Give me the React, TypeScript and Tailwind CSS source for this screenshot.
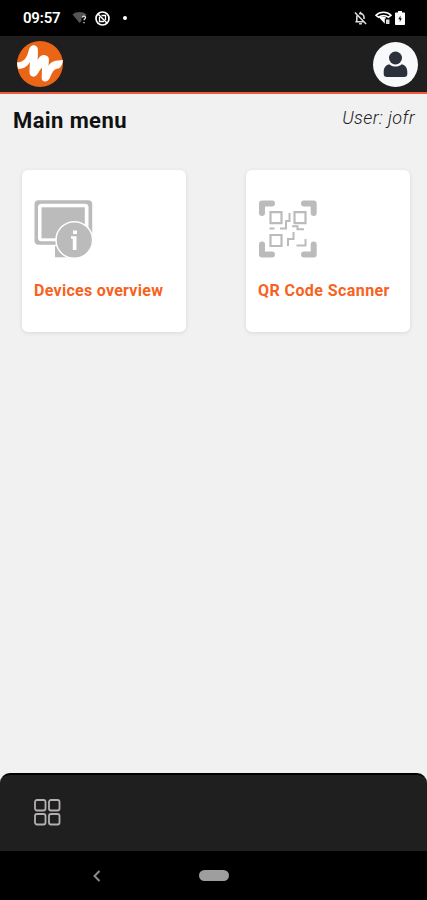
const StatusBar = () => (
  <div className="flex h-9 shrink-0 items-center bg-black pl-[23px] pr-[22px] text-white">
    <span className="w-[49px] pt-[1px] text-[15px] font-semibold leading-none tracking-[-0.2px]">09:57</span>
    <svg className="h-[14px] w-[16px]" viewBox="0 0 16 14" fill="none">
      <path d="M0.5 3.5C4 .2 11 .2 14.5 3.5L12 6.5H9.5V10L7.5 12z" fill="#555" />
      <path d="M10.3 6.5c.3-2 3.4-1.8 3.2.1-.1 1.2-1.5 1.3-1.5 2.7M12 11v1.3" stroke="#ddd" strokeWidth="1.3" />
    </svg>
    <svg className="ml-[7px] h-[15px] w-[15px]" viewBox="0 0 15 15" fill="none" stroke="#fff">
      <circle cx="7.5" cy="7.5" r="6.5" strokeWidth="1.7" />
      <path d="M3 3l9 9" strokeWidth="1.5" />
      <path d="M4.5 6v4.5H9M6.5 4.5h4v4.5" strokeWidth="1.3" />
    </svg>
    <span className="ml-[13px] h-1 w-1 rounded-full bg-white" />
    <svg className="ml-auto h-[14px] w-[13px]" viewBox="0 0 14 15" fill="none" stroke="#ddd" strokeWidth="1.7">
      <path d="M3 11.5V6.8c0-1 .3-2 1-2.7M5.5 3C9 2 10.8 4.5 10.8 7v1.5M1.5 11.5h9M1 1.5l12 12.5" />
      <path d="M7 .8v2M5.5 13.7h3" />
    </svg>
    <svg className="ml-[8px] h-[14px] w-[17px]" viewBox="0 0 17 14" fill="none">
      <path d="M1 4.3C5 .3 12 .3 16 4.3L13.5 6.2C10 3.8 7 3.8 3.5 6.2z" stroke="#fff" strokeWidth="1.6" />
      <path d="M4 6.5c2-1.4 5-1.4 7 0v1H9.8v5.2z" fill="#fff" />
      <path d="M11 8.5h3.5V13H11z" fill="#ddd" />
    </svg>
    <svg className="ml-[3px] h-[14px] w-[10px]" viewBox="0 0 10 14">
      <path d="M3 0h4v1.5h2.2q.8 0 .8.8v10.9q0 .8-.8.8H.8q-.8 0-.8-.8V2.3q0-.8.8-.8H3z" fill="#fff" />
      <path d="M5.5 4.5L3.3 8.3h1.5v2.7l2-3.7H5.5z" fill="#111" />
    </svg>
  </div>
);

const Header = () => (
  <header className="flex h-[58px] shrink-0 items-center justify-between border-b-2 border-[#ee5a3b] bg-[#1f1f1f] pl-[17px] pr-[9px]">
    <svg className="h-[46px] w-[46px]" viewBox="50 125 136 136">
      <circle cx="118" cy="193" r="68" fill="#eb6516" />
      <path
        d="M50 188C68 187 78 179 84 155C88 139 96 136 103 138C113 141 112 151 112 160L111 181C116 171 124 165 133 167C146 170 145 179 144 188L143 198C151 184 164 182 186 181C185 194 180 202 173 206C160 205 154 217 148 232C142 249 122 248 123 233L124 203C118 209 114 218 109 225C101 235 86 231 87 216L88 187C80 202 69 206 54 208Q50 199 50 188z"
        fill="#fff"
      />
    </svg>
    <div className="flex h-[45px] w-[45px] items-center justify-center rounded-full bg-[#f8f9fb]">
      <svg className="h-[27px] w-[25px]" viewBox="0 0 25 27" fill="#2b303b">
        <circle cx="12.5" cy="7" r="6.5" />
        <path d="M6.2 13.2C9.5 16.3 15.5 16.3 18.8 13.2C22.5 14 24.3 17 24.3 21V23Q24.3 26 21 26H4Q.7 26 .7 23V21C.7 17 2.5 14 6.2 13.2z" />
      </svg>
    </div>
  </header>
);

const DevicesIcon = () => (
  <svg className="h-[60px] w-[60px]" viewBox="0 0 60 60">
    <path d="M21 47h20v11.3H21z" fill="#bbb" />
    <rect x="0.5" y="1.3" width="57.7" height="44.5" rx="4" fill="#bbb" />
    <rect x="4" y="4.7" width="50.5" height="37.6" rx="3.5" fill="#fff" />
    <rect x="7.5" y="8.3" width="43.3" height="31" fill="#bbb" />
    <circle cx="40.3" cy="41" r="18.3" fill="#bbb" stroke="#fff" strokeWidth="1.5" />
    <path d="M39 31.5h4V35h-4zM37 37.2h5.5V51h-3.7V39.7H37z" fill="#fff" />
  </svg>
);

const QrIcon = () => (
  <svg className="h-[60px] w-[60px]" viewBox="0 0 60 60" fill="none" stroke="#bbb">
    <path d="M4 14V4.5h10M46 4.5h9.7V14M4 45.500V55.500h10M46 55.500h9.700V45.500" strokeWidth="6" strokeLinecap="round" strokeLinejoin="round" />
    <path d="M12.500 13.200h11v11h-11zM36.500 13.200h11v11h-11zM12.500 36h11v11h-11z" strokeWidth="2.200" />
    <path d="M31.500 14v8H28v7.500h-6M11.500 29.500h5M34 27.300h5.500v3H46M35.500 33v7H30v7M47.500 40v6.500h-9" strokeWidth="2" />
  </svg>
);

const cards = [
  { title: 'Devices overview', icon: <DevicesIcon />, titleClass: 'tracking-[0.28px]' },
  { title: 'QR Code Scanner', icon: <QrIcon />, titleClass: 'tracking-[0.42px]' },
];

const App = () => (
  <div className="flex h-[900px] w-full flex-col overflow-hidden bg-[#f1f1f1] font-[Roboto,sans-serif]">
    <StatusBar />
    <Header />
    <main className="flex-1">
      <div className="flex justify-between pl-[13px] pr-[12px] pt-[12px]">
        <h1 className="text-[22px] font-bold leading-[30px] tracking-[0.4px] text-[#111]">Main menu</h1>
        <p className="text-[18px] font-light italic leading-[24px] tracking-[0.4px] text-[#222]">User: jofr</p>
      </div>
      <div className="flex justify-between pl-[22px] pr-[17px] pt-[34px]">
        {cards.map((card) => (
          <div key={card.title} className="h-[162px] w-[164px] rounded-md bg-white pl-[12px] pt-[29px] shadow-[0_1px_4px_rgba(0,0,0,0.1)]">
            {card.icon}
            <h2 className={`mt-[22px] whitespace-nowrap text-[16px] font-bold leading-5 text-[#f7621e] ${card.titleClass}`}>{card.title}</h2>
          </div>
        ))}
      </div>
    </main>
    <nav className="h-[78px] shrink-0 rounded-t-[10px] border-t-2 border-black bg-[#1f1f1f] pl-[34px] pt-[24px]">
      <svg className="h-[27px] w-[27px]" viewBox="0 0 27 27" fill="none" stroke="#b5b0b0" strokeWidth="1.8">
        <rect x="1" y="1" width="10.5" height="10.5" rx="2" />
        <rect x="15" y="1" width="10.5" height="10.5" rx="2" />
        <rect x="1" y="15" width="10.5" height="10.5" rx="2" />
        <rect x="15" y="15" width="10.5" height="10.5" rx="2" />
      </svg>
    </nav>
    <div className="flex h-[49px] shrink-0 items-center bg-black pl-[92px]">
      <svg className="h-[12px] w-[9px]" viewBox="0 0 9 12" fill="none" stroke="#8c8c8c" strokeWidth="2">
        <path d="M7.5 1L2.5 6l5 5" />
      </svg>
      <span className="ml-[98px] h-[11px] w-[30px] rounded-full bg-[#9e9e9e]" />
    </div>
  </div>
);

export default App;
